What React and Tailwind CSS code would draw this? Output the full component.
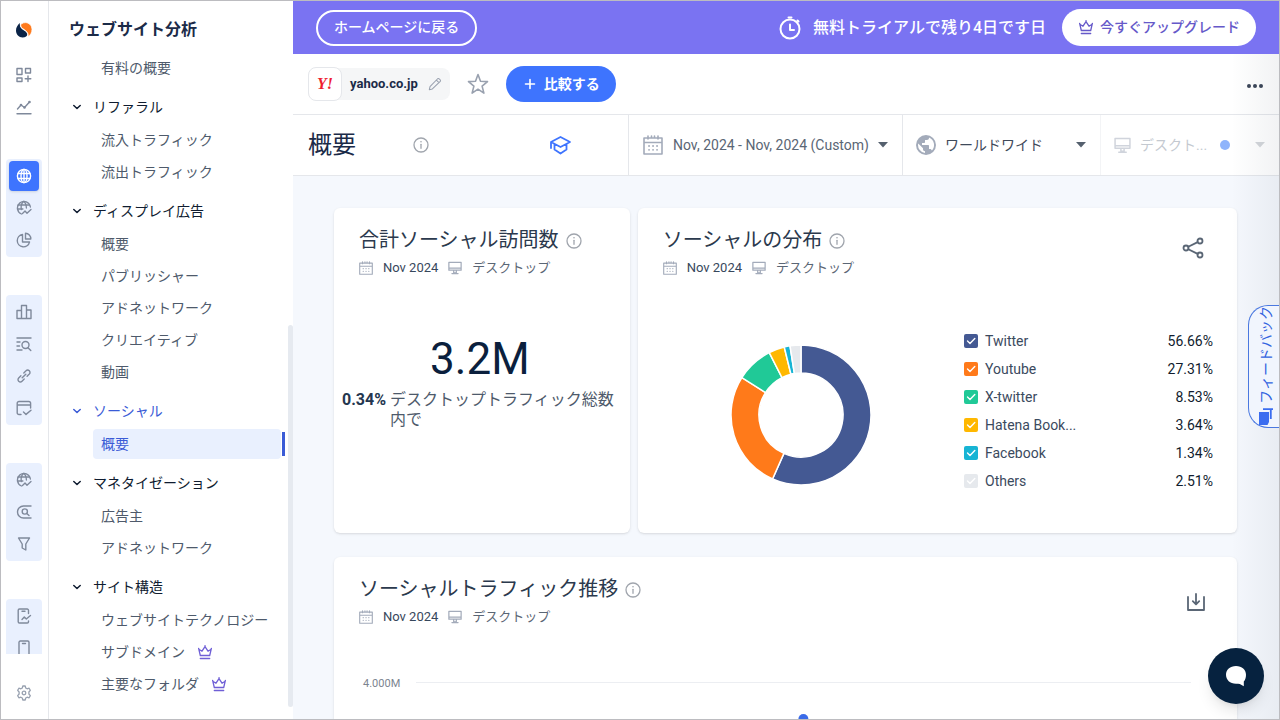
import React, { useState } from "react";

const Icon = ({ size = 16, box = 16, width = 1.4, className = "", children }) => (
  <svg
    width={size}
    height={size}
    viewBox={`0 0 ${box} ${box}`}
    fill="none"
    stroke="currentColor"
    strokeWidth={width}
    strokeLinecap="round"
    strokeLinejoin="round"
    className={`shrink-0 ${className}`}
    aria-hidden="true"
  >
    {children}
  </svg>
);

const Logo = () => (
  <svg width="16" height="16" viewBox="0 0 16 16" aria-hidden="true">
    <path
      d="M4 1C1.500 3 0 5.500 0 8.500c0 4 3 6.900 6.500 6.900 3 0 5-1.400 4.800-3.200C11 10 8.500 9 6.500 7.500 4.500 6 3.200 3.500 4 1Z"
      fill="#0b2447"
    />
    <path
      d="M12 15C14.500 13 16 10.500 16 7.500 16 3.500 13 .6 9.500.6c-3 0-5 1.400-4.800 3.200C5 6 7.500 7 9.500 8.500 11.500 10 12.800 12.500 12 15Z"
      fill="#ff7a1c"
      stroke="#fff"
      strokeWidth="0.8"
    />
  </svg>
);

const DashboardIcon = () => (
  <Icon>
    <rect x="1" y="1.5" width="5" height="6" />
    <rect x="9.5" y="1.5" width="5" height="4.5" />
    <rect x="1" y="11" width="5" height="3.5" />
    <path d="M12 9v5.5M9.2 11.8h5.6" />
  </Icon>
);

const TrendIcon = () => (
  <Icon>
    <path d="M1.5 10 5 6l3.5 2.5L13.5 3M1 14.8h14" />
    <circle cx="5" cy="6" r="0.6" />
    <circle cx="8.5" cy="8.5" r="0.6" />
    <circle cx="13.5" cy="3" r="0.6" />
  </Icon>
);

const GlobeIcon = () => (
  <Icon>
    <circle cx="8" cy="8" r="6.6" />
    <ellipse cx="8" cy="8" rx="3" ry="6.6" />
    <path d="M2.2 5.5h11.6M2.2 10.5h11.6M8 1.4v13.2" />
  </Icon>
);

const GlobeTrendIcon = () => (
  <Icon width={1.3}>
    <path d="M5.500 14A6.500 6.500 0 1 1 14.400 7" />
    <path d="M5.400 9.500C4.800 6.500 5.500 3 7.800 1.400M10.400 8C10.300 5 9.500 2.600 7.800 1.400M2.200 5h11M1.400 9h5.500" />
    <path d="m6.500 13.500 2.500-2.500 2 2.300 4-3.800" />
  </Icon>
);

const PieIcon = () => (
  <Icon>
    <path d="M6.500 2.500a6.200 6.200 0 1 0 7 7.500H6.500Z" />
    <path d="M9.500 1.200v5.800h5.300a5.600 5.600 0 0 0-5.300-5.800Z" />
  </Icon>
);

const ColumnsIcon = () => (
  <Icon>
    <path d="M1 14.500v-8h4.500v8ZM5.500 14.500v-13h5v13ZM10.500 14.500v-8.500H15v8.500Z" />
  </Icon>
);

const KeywordIcon = () => (
  <Icon>
    <path d="M1 2h14M1 6h3M1 10h2.500M1 14h5" />
    <circle cx="9.5" cy="9" r="3.5" />
    <path d="m12 11.700 2.800 2.800" />
  </Icon>
);

const LinkIcon = () => (
  <Icon>
    <path d="m6.200 9.800 3.600-3.600" />
    <path d="M7.800 4.900 10 2.800a2.300 2.300 0 0 1 3.300 3.300L11.100 8.200" />
    <path d="M8.200 11.100 6 13.200a2.300 2.300 0 0 1-3.300-3.300L4.900 7.800" />
  </Icon>
);

const WindowCheckIcon = () => (
  <Icon>
    <path d="M5 14.500H3A1.800 1.800 0 0 1 1.200 12.700V3.300A1.800 1.800 0 0 1 3 1.500h9.800a1.800 1.800 0 0 1 1.800 1.800V8M1.200 5h13.400" />
    <path d="m7.500 12 2.500 2.400 5-4.200" />
  </Icon>
);

const SearchBoxIcon = () => (
  <Icon>
    <path d="M15 2H7.500a6 6 0 0 0 0 12H15" />
    <circle cx="8.8" cy="7.5" r="2.6" />
    <path d="m10.800 9.500 2.200 2" />
  </Icon>
);

const FunnelIcon = () => (
  <Icon>
    <path d="M2.500 2h11L9.800 8v6l-3.600-2V8Z" />
  </Icon>
);

const PhoneTrendIcon = () => (
  <Icon>
    <path d="M12.500 5.500V2.300A1.300 1.300 0 0 0 11.200 1H3.500a1.300 1.300 0 0 0-1.300 1.300v11.400A1.300 1.300 0 0 0 3.500 15h7.700a1.300 1.300 0 0 0 1.300-1.300V13M6 3.200h3" />
    <path d="m6 11.500 2.300-2.500 2 2 4.200-3.500" />
  </Icon>
);

const PhoneIcon = () => (
  <Icon>
    <path d="M3 20V2.300A1.300 1.300 0 0 1 4.300 1h7.400A1.300 1.300 0 0 1 13 2.300V20M6.500 3.500h3" />
  </Icon>
);

const GearIcon = () => (
  <Icon width={1.3}>
    <path d="M6.800 1h2.400l.5 2 1.400.8 2-.6 1.200 2.100L12.900 7v2l1.400 1.700-1.200 2.100-2-.6-1.400.8-.5 2H6.800l-.5-2-1.400-.8-2 .6-1.200-2.100L3.100 9V7L1.700 5.300l1.200-2.100 2 .6L6.300 3Z" />
    <circle cx="8" cy="8" r="1.8" />
  </Icon>
);

const CrownIcon = ({ className }) => (
  <Icon width={1.3} className={className}>
    <path d="M3.300 11.500 1.800 5.200 5 7.200 8 2.600l3 4.600 3.200-2-1.500 6.300ZM3.300 14.500h9.400" />
    <path d="M1.600 4.400h.1M8 1.700h.1M14.300 4.400h.1" />
  </Icon>
);

const CalendarIcon = ({ size = 14 }) => (
  <Icon size={size} box={20} width={1.6} className="text-[#a3abba]">
    <path d="M1 3h18v16H1ZM1 7.500h18M5 1v3M8.500 1v2M11.500 1v2M15 1v3" />
    <path d="M6 11h.1M10 11h.1M14 11h.1M6 14.800h.1M10 14.800h.1M14 14.800h.1" strokeWidth="1.800" />
  </Icon>
);

const MonitorIcon = ({ size = 14 }) => (
  <Icon size={size} width={1.4} className="text-[#a3abba]">
    <path d="M1 1.500h14v9H1ZM1 8.200h14M6.500 10.500v3h3v-3M4.500 14.300h7" />
  </Icon>
);

const InfoIcon = () => (
  <Icon width={1.3} className="text-[#a0a5ad]">
    <circle cx="8" cy="8" r="7" />
    <path d="M8 7.300v4" />
    <path d="M8 4.800h.01" strokeWidth="1.600" />
  </Icon>
);

const Caret = () => (
  <svg width="10" height="6" viewBox="0 0 10 6" className="shrink-0" aria-hidden="true">
    <path d="M0 0h10L5 5.500Z" fill="#55606e" />
  </svg>
);

const railTop = [
  { name: "ダッシュボード", icon: <DashboardIcon /> },
  { name: "トレンド", icon: <TrendIcon /> },
];

const railGroups = [
  [
    { name: "ウェブサイト", icon: <GlobeIcon />, active: true },
    { name: "市場", icon: <GlobeTrendIcon /> },
    { name: "シェア", icon: <PieIcon /> },
  ],
  [
    { name: "比較", icon: <ColumnsIcon /> },
    { name: "キーワード", icon: <KeywordIcon /> },
    { name: "リンク", icon: <LinkIcon /> },
    { name: "ページ", icon: <WindowCheckIcon /> },
  ],
  [
    { name: "業界", icon: <GlobeTrendIcon /> },
    { name: "検索", icon: <SearchBoxIcon /> },
    { name: "ファネル", icon: <FunnelIcon /> },
  ],
  [
    { name: "アプリ分析", icon: <PhoneTrendIcon /> },
    { name: "アプリ", icon: <PhoneIcon /> },
  ],
];

const menu = [
  {
    title: "リファラル",
    items: [{ name: "流入トラフィック" }, { name: "流出トラフィック" }],
  },
  {
    title: "ディスプレイ広告",
    items: [
      { name: "概要" },
      { name: "パブリッシャー" },
      { name: "アドネットワーク" },
      { name: "クリエイティブ" },
      { name: "動画" },
    ],
  },
  {
    title: "ソーシャル",
    active: true,
    items: [{ name: "概要", active: true }],
  },
  {
    title: "マネタイゼーション",
    items: [{ name: "広告主" }, { name: "アドネットワーク" }],
  },
  {
    title: "サイト構造",
    items: [
      { name: "ウェブサイトテクノロジー" },
      { name: "サブドメイン", premium: true },
      { name: "主要なフォルダ", premium: true },
    ],
  },
];

const sources = [
  { name: "Twitter", value: 56.66, color: "#445993" },
  { name: "Youtube", value: 27.31, color: "#ff7a1a" },
  { name: "X-twitter", value: 8.53, color: "#20c997" },
  { name: "Hatena Book...", value: 3.64, color: "#ffb800" },
  { name: "Facebook", value: 1.34, color: "#17b4d4" },
  { name: "Others", value: 2.51, color: "#e6e9ed" },
];

const RailButton = ({ item }) => (
  <button
    type="button"
    aria-label={item.name}
    className={
      item.active
        ? "my-px flex h-[30px] w-[30px] shrink-0 items-center justify-center rounded bg-[#3e74fe] text-white shadow"
        : "flex h-8 w-8 shrink-0 items-center justify-center text-[#7f899b]"
    }
  >
    {item.icon}
  </button>
);

const Rail = () => (
  <aside className="flex w-12 shrink-0 flex-col border-r border-gray-200 pr-px">
    <div className="flex h-[58px] shrink-0 items-center justify-center">
      <Logo />
    </div>
    <div className="flex min-h-0 flex-1 flex-col items-center overflow-hidden">
      <div className="flex flex-col items-center">
        {railTop.map((item) => (
          <RailButton key={item.name} item={item} />
        ))}
      </div>
      <div className="mt-9 flex flex-col gap-[38px]">
        {railGroups.map((group, i) => (
          <div key={i} className="flex w-9 flex-col items-center rounded bg-[#e9f0fe] py-px">
            {group.map((item) => (
              <RailButton key={item.name} item={item} />
            ))}
          </div>
        ))}
      </div>
    </div>
    <div className="flex h-[65px] shrink-0 items-center justify-center pt-3 text-[#98a1b0]">
      <button type="button" aria-label="設定">
        <GearIcon />
      </button>
    </div>
  </aside>
);

const MenuItem = ({ item }) => (
  <li className="flex h-8 items-center">
    <a
      href="#"
      className={
        item.active
          ? "flex h-[30px] flex-1 items-center rounded bg-[#e9f0fe] px-2 text-[#3a5bd6]"
          : "flex h-[30px] flex-1 items-center px-2 text-[#4e5a6b]"
      }
    >
      {item.name}
      {item.premium && <CrownIcon className="ml-3 text-[#6f5fd6]" />}
    </a>
    <span className={item.active ? "ml-px h-6 w-[3px] bg-[#3a5bd6]" : "ml-px h-6 w-[3px]"} />
  </li>
);

const Sidebar = () => (
  <div className="flex w-[244px] shrink-0 flex-col">
    <h2 className="flex h-[51px] shrink-0 items-center pt-1.5 pl-5 text-base font-bold text-[#1b2b48]">
      ウェブサイト分析
    </h2>
    <div className="flex min-h-0 flex-1 text-sm">
      <nav className="min-w-0 flex-1 overflow-hidden pl-7">
        <ul className="pl-4">
          <MenuItem item={{ name: "有料の概要" }} />
        </ul>
        {menu.map((section) => (
          <section key={section.title}>
            <button
              type="button"
              className={
                section.active
                  ? "flex h-10 items-center pt-1.5 text-[#3a5bd6]"
                  : "flex h-10 items-center pt-1.5 text-[#0f1c30]"
              }
            >
              <span className="w-4">
                <Icon size={8} box={8} width={1.5} className="-ml-1">
                  <path d="M0.800 2.500 4 5.500 7.200 2.500" />
                </Icon>
              </span>
              {section.title}
            </button>
            <ul className="pl-4">
              {section.items.map((item) => (
                <MenuItem key={item.name} item={item} />
              ))}
            </ul>
          </section>
        ))}
      </nav>
      <div className="ml-[3px] flex w-[5px] flex-col justify-end pb-3">
        <div className="h-[382px] rounded-full bg-[#e6eaf0]" />
      </div>
    </div>
  </div>
);

const TrialBanner = () => (
  <div className="flex h-[53px] shrink-0 items-center bg-[#7a73f2] pr-[23px] pl-[23px] text-white">
    <button
      type="button"
      className="h-9 rounded-full border-2 border-white px-4 pb-0.5 text-sm font-medium"
    >
      ホームページに戻る
    </button>
    <div className="ml-auto flex items-center text-base font-medium">
      <Icon size={24} box={24} width={2} className="mr-3">
        <circle cx="13" cy="13" r="9.500" />
        <path d="M13 8.500V14h4M11.500 1.500h3M20.500 4.500l1 1" />
      </Icon>
      無料トライアルで残り4日です日
    </div>
    <button
      type="button"
      className="ml-4 flex h-[37px] items-center rounded-full bg-white px-4 pb-0.5 text-sm font-medium text-[#6659c9]"
    >
      <CrownIcon className="mr-1.5" />
      今すぐアップグレード
    </button>
  </div>
);

const SiteBar = () => (
  <div className="flex h-[61px] shrink-0 items-center border-b border-gray-200 pr-4 pl-[15px]">
    <div className="flex h-8 items-center rounded-lg bg-[#f5f6f7] pr-2">
      <span className="flex h-[34px] w-[34px] items-center justify-center rounded-lg border border-gray-200 bg-white font-['Liberation_Serif'] text-base leading-none font-bold text-[#ee2030] italic">
        Y!
      </span>
      <span className="ml-2 text-[13px] font-bold text-[#1b2b48]">yahoo.co.jp</span>
      <button type="button" aria-label="編集" className="ml-2.5 text-gray-400">
        <Icon size={14} width={1.2}>
          <path d="m1.500 14.500.8-3.500L11 2a1.200 1.200 0 0 1 1.600 0L14 3.400a1.200 1.200 0 0 1 0 1.600L5 13.700ZM9.600 3.500l2.900 2.900" />
        </Icon>
      </button>
    </div>
    <button type="button" aria-label="お気に入り" className="ml-4 text-gray-400">
      <Icon size={24} box={24} width={1.6}>
        <path d="m12 2.500 2.500 6.700 7 .4-5.400 4.500 1.800 7L12 17.200l-5.900 3.900 1.800-7L2.500 9.600l7-.4Z" />
      </Icon>
    </button>
    <button
      type="button"
      className="ml-4 flex h-9 items-center rounded-full bg-[#3e74fe] px-4 text-sm font-bold text-white"
    >
      <Icon width={1.6} className="mr-1.5">
        <path d="M8 3.500v9M3.500 8h9" />
      </Icon>
      比較する
    </button>
    <button type="button" aria-label="その他" className="ml-auto pt-1 text-[#3c4658]">
      <svg width="16" height="4" viewBox="0 0 16 4" fill="currentColor" aria-hidden="true">
        <circle cx="2" cy="2" r="2" />
        <circle cx="8" cy="2" r="2" />
        <circle cx="14" cy="2" r="2" />
      </svg>
    </button>
  </div>
);

const FilterBar = () => (
  <div className="flex h-[61px] shrink-0 items-center border-b border-gray-200 text-sm text-[#5a6675]">
    <div className="flex flex-1 items-center pl-[15px]">
      <h1 className="text-2xl text-[#1b2b48]">概要</h1>
      <span className="ml-[57px]">
        <InfoIcon />
      </span>
      <button type="button" aria-label="学習" className="mr-14 ml-auto text-[#3e74fe]">
        <Icon size={24} box={24} width={1.8}>
          <path d="M12.500 4 3 9l9.500 5L22 9ZM6.500 11.500v5l6 4 6-4v-5M3 9.500V15" />
        </Icon>
      </button>
    </div>
    <div className="flex h-full w-[274px] shrink-0 items-center border-l border-gray-200 pr-3.5 pl-3.5">
      <CalendarIcon size={20} />
      <select aria-label="期間" className="ml-2.5 appearance-none">
        <option>Nov, 2024 - Nov, 2024 (Custom)</option>
      </select>
      <span className="ml-auto">
        <Caret />
      </span>
    </div>
    <div className="flex h-full w-[198px] shrink-0 items-center border-l border-gray-200 pr-3.5 pl-[13px]">
      <svg width="20" height="20" viewBox="0 0 20 20" className="shrink-0" aria-hidden="true">
        <circle cx="10" cy="10" r="10" fill="#a3abba" />
        <path
          d="M2.200 8.500 7 13.200v1.100c0 1.100.9 2 2 2V18A8 8 0 0 1 2.200 8.500ZM15.900 15.500c-.3-.9-1-1.500-1.900-1.500h-1v-3c0-.6-.4-1-1-1H6V8h2c.6 0 1-.4 1-1V5h2c1.100 0 2-.9 2-2v-.4a8 8 0 0 1 2.900 12.900Z"
          fill="#fff"
        />
      </svg>
      <select aria-label="国" className="ml-[9px] appearance-none text-[#3f4a5a]">
        <option>ワールドワイド</option>
      </select>
      <span className="ml-auto">
        <Caret />
      </span>
    </div>
    <div className="flex h-full w-[179px] shrink-0 items-center border-l border-gray-100 pr-3.5 pl-[13px]">
      <span className="flex items-center opacity-50">
        <MonitorIcon size={17} />
        <select aria-label="デバイス" disabled className="ml-[9px] appearance-none text-[#8a94a3]">
          <option>デスクト...</option>
        </select>
      </span>
      <span className="ml-3 h-2.5 w-2.5 rounded-full bg-[#8fb4fb]" />
      <span className="ml-auto opacity-25">
        <Caret />
      </span>
    </div>
  </div>
);

const CardHeader = ({ title, children }) => (
  <div className="flex items-start pr-8 pl-[25px]">
    <div>
      <h3 className="flex h-8 items-center text-xl text-[#2b394d]">
        {title}
        <span className="mt-0.5 ml-[7px]">
          <InfoIcon />
        </span>
      </h3>
      <p className="flex h-6 items-center text-[13px] text-[#37475c]">
        <CalendarIcon />
        <span className="mr-2.5 ml-2.5">Nov 2024</span>
        <MonitorIcon />
        <span className="ml-2.5 text-[#5b6675]">デスクトップ</span>
      </p>
    </div>
    {children}
  </div>
);

const Donut = ({ data }) => {
  const total = data.reduce((sum, d) => sum + d.value, 0);
  const point = (r, turn) => {
    const a = turn * 2 * Math.PI - Math.PI / 2;
    return `${70 + r * Math.cos(a)} ${70 + r * Math.sin(a)}`;
  };
  let start = 0;

  return (
    <svg width="140" height="140" viewBox="0 0 140 140" role="img" aria-label="ソーシャルの分布">
      {data.map((d) => {
        const end = start + d.value / total;
        const large = end - start > 0.5 ? 1 : 0;
        const path = `M${point(70, start)}A70 70 0 ${large} 1 ${point(70, end)}L${point(42, end)}A42 42 0 ${large} 0 ${point(42, start)}Z`;
        start = end;
        return <path key={d.name} d={path} fill={d.color} stroke="#fff" strokeWidth="1.5" />;
      })}
    </svg>
  );
};

const Legend = ({ data, hidden, onToggle }) => (
  <ul className="w-[249px] shrink-0 text-sm">
    {data.map((d) => (
      <li key={d.name} className="flex h-7 items-center justify-between">
        <label className="flex items-center text-[#3b4a5e]">
          <span className="relative mr-[7px] flex h-3.5 w-3.5">
            <input
              type="checkbox"
              checked={!hidden.includes(d.name)}
              onChange={() => onToggle(d.name)}
              className="h-3.5 w-3.5 appearance-none rounded-xs"
              style={{ backgroundColor: d.color }}
            />
            <Icon size={14} box={14} className="pointer-events-none absolute inset-0 text-white">
              <path d="m3.500 7 2.500 2.500 4.800-5" />
            </Icon>
          </span>
          {d.name}
        </label>
        <span className="text-[#111c2e]">{d.value.toFixed(2)}%</span>
      </li>
    ))}
  </ul>
);

const Feedback = () => (
  <button
    type="button"
    className="absolute top-[304px] right-0 flex h-[123px] w-[31px] flex-col items-center justify-end gap-1 rounded-l-[20px] border border-r-0 border-[#4a78e0] bg-[#f1f5fd] pb-0.5 pl-1 text-sm text-[#3163e0]"
  >
    <span className="rotate-180 leading-5 [text-orientation:sideways] [writing-mode:vertical-rl]">
      フィードバック
    </span>
    <svg width="16" height="17" viewBox="0 0 16 17" aria-hidden="true">
      <path d="M1 4h10v10l-1.500 3H1Z" fill="#3b6df0" />
      <path d="M5 1.200h10M12.800 1v10" stroke="#3b6df0" strokeWidth="1.8" fill="none" />
    </svg>
  </button>
);

export default function App() {
  const [hidden, setHidden] = useState([]);

  const toggle = (name) => {
    setHidden(hidden.includes(name) ? hidden.filter((n) => n !== name) : [...hidden, name]);
  };

  return (
    <div className="relative flex h-screen overflow-hidden border border-[#bcbcc0] bg-white font-['Roboto','Noto_Sans_CJK_JP',sans-serif]">
      <Rail />
      <Sidebar />

      <div className="flex min-w-0 flex-1 flex-col">
        <TrialBanner />
        <div className="relative flex min-h-0 flex-1 flex-col">
          <SiteBar />
          <FilterBar />

          <main className="grid min-h-0 flex-1 grid-cols-12 content-start gap-x-2 gap-y-6 overflow-hidden bg-[#f5f8fd] pt-8 pr-[42px] pl-[41px]">
            <section className="col-span-4 flex min-h-[325px] flex-col rounded-md bg-white pt-4 shadow-sm">
              <CardHeader title="合計ソーシャル訪問数" />
              <div className="mt-12 pr-1 text-center text-[44px] leading-[62px] text-[#0b1f3d]">3.2M</div>
              <p className="flex px-2 text-base leading-5 text-[#4e5a6b]">
                <strong className="mr-1 font-bold text-[#24364f]">0.34%</strong>
                <span>デスクトップトラフィック総数内で</span>
              </p>
            </section>

            <section className="col-span-8 flex min-h-[325px] flex-col rounded-md bg-white pt-4 shadow-sm">
              <CardHeader title="ソーシャルの分布">
                <button type="button" aria-label="共有" className="mt-3 ml-auto text-[#5a6675]">
                  <Icon size={24} box={24} width={1.8}>
                    <circle cx="5" cy="12" r="2.500" />
                    <circle cx="19" cy="5" r="2.500" />
                    <circle cx="19" cy="19" r="2.500" />
                    <path d="m7.300 10.800 9.400-4.700M7.300 13.200l9.400 4.700" />
                  </Icon>
                </button>
              </CardHeader>
              <div className="mt-[47px] flex items-center pr-6">
                <div className="flex flex-1 justify-center pt-2">
                  <Donut data={sources.filter((s) => !hidden.includes(s.name))} />
                </div>
                <Legend data={sources} hidden={hidden} onToggle={toggle} />
              </div>
            </section>

            <section className="col-span-12 rounded-md bg-white pt-4 pb-6 shadow-sm">
              <CardHeader title="ソーシャルトラフィック推移">
                <button type="button" aria-label="ダウンロード" className="mt-5 ml-auto text-[#5a6675]">
                  <Icon size={18} box={18} width={1.8}>
                    <path d="M1 4v13h16V4M9 1v10M5.800 8.200 9 11.400l3.200-3.200" />
                  </Icon>
                </button>
              </CardHeader>
              <div className="mt-[47px] flex pr-[46px] pl-[29px] text-[11px] leading-4 text-[#7c8490]">
                <span>4.000M</span>
                <svg className="mt-1.5 ml-4 h-40 flex-1" aria-hidden="true">
                  <path d="M0 .5H2000" stroke="#eceef2" />
                  <circle cx="50%" cy="37" r="5" fill="#3a6be8" />
                </svg>
              </div>
            </section>
          </main>

          <div className="pointer-events-none absolute inset-y-0 right-0 w-12 bg-linear-to-r from-transparent to-[#20304a]/6" />
        </div>
      </div>

      <Feedback />
      <button
        type="button"
        aria-label="チャット"
        className="absolute right-[15px] bottom-[15px] flex h-14 w-14 items-center justify-center rounded-full bg-[#06223f] shadow-lg"
      >
        <svg width="22" height="22" viewBox="0 0 22 22" aria-hidden="true">
          <path
            d="M11 1C5 1 1 4.800 1 9.800s4 9 10 9c1.500 0 2.700 0 3.800.3L18.800 21.300V16.600C20.300 15 21 12.500 21 9.800 21 4.800 17 1 11 1Z"
            fill="#fff"
          />
        </svg>
      </button>
    </div>
  );
}
